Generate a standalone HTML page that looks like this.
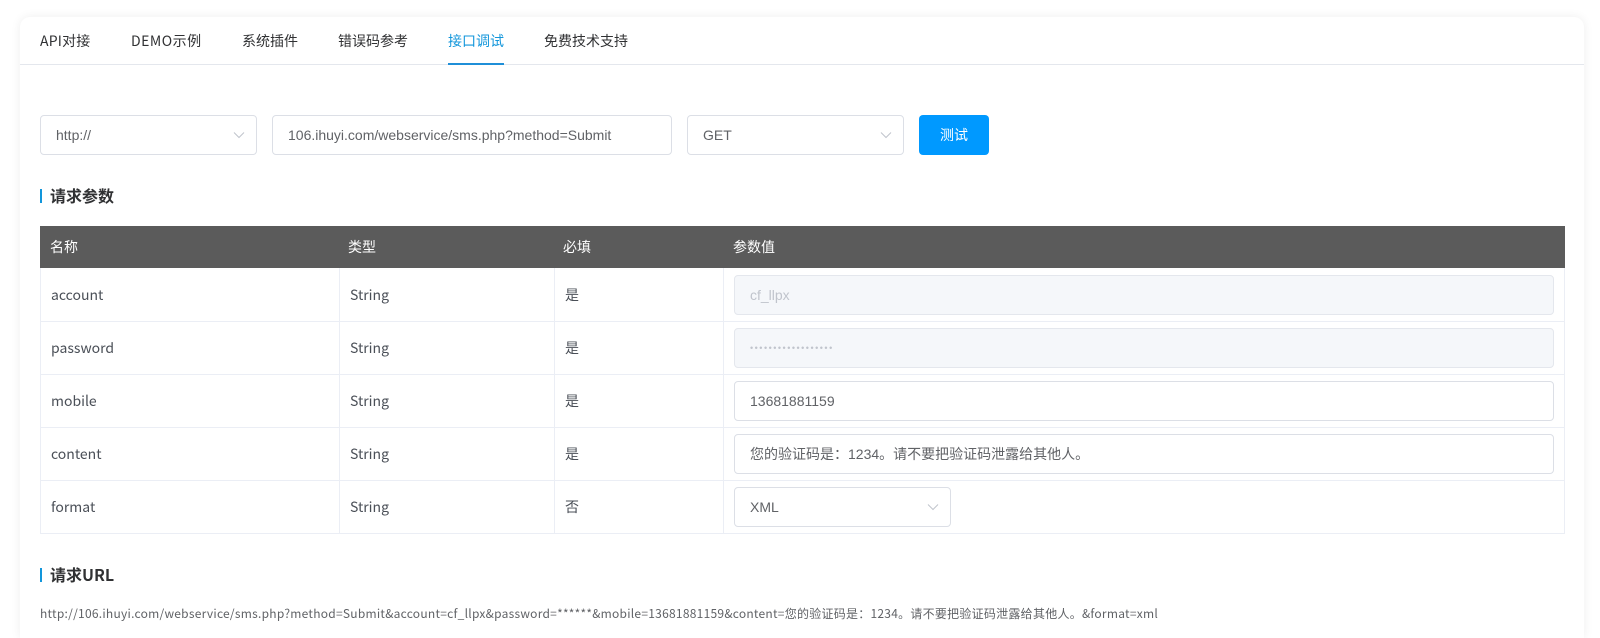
<!DOCTYPE html>
<html lang="zh">
<head>
<meta charset="utf-8">
<title>接口调试</title>
<style>
html,body{margin:0;padding:0;width:1600px;height:638px;overflow:hidden;background:#fff}
body{position:relative;font-family:"Noto Sans CJK SC","Liberation Sans",sans-serif;font-size:14px;color:#333}
div,span{position:absolute;box-sizing:border-box;white-space:nowrap}
.card{left:20px;top:17px;width:1564px;height:621px;background:#fff;border-radius:10px 10px 0 0;box-shadow:0 0 10px rgba(0,0,0,.07)}
.navline{left:20px;top:64px;width:1564px;height:1px;background:#e4e7ed}
.tab{top:29px;height:24px;line-height:24px;font-size:14px;color:#303133}
.tab.on{color:#1296db}
.ink{left:448px;top:63px;width:56px;height:2px;background:#1f8fd8}
.box{height:40px;border:1px solid #dcdfe6;border-radius:4px;background:#fff;font-family:"Liberation Sans","Noto Sans CJK SC",sans-serif;font-size:14px;line-height:38px;color:#606266;padding-left:15px}
.box.dis{background:#f5f7fa;border-color:#e4e7ed;color:#c0c4cc}
.arr{position:absolute;top:14px;right:11px}
.btn{left:919px;top:115px;width:70px;height:40px;background:#0099ff;border-radius:4px;color:#fff;text-align:center;line-height:40px;font-size:14px}
.bar{left:40px;width:2px;height:14px;background:#1296db}
.h{left:50px;height:24px;line-height:24px;font-size:16px;font-weight:700;color:#303133}
.thead{left:40px;top:226px;width:1525px;height:42px;background:#5b5b5b}
.th{top:226px;height:42px;line-height:42px;font-size:14px;color:#fff}
.hl{left:40px;width:1525px;height:1px;background:#ebeef5}
.vl{top:268px;width:1px;height:265px;background:#ebeef5}
.td{height:24px;line-height:24px;font-size:14px;color:#4a4f57}
.url{left:40px;top:604px;height:20px;line-height:20px;font-size:12px;color:#606266;letter-spacing:.255px}
</style>
</head>
<body>
<div class="card"></div>
<div class="navline"></div>
<div class="tab" style="left:40px;letter-spacing:.2px">API对接</div>
<div class="tab" style="left:131px;letter-spacing:.5px">DEMO示例</div>
<div class="tab" style="left:242px">系统插件</div>
<div class="tab" style="left:338px">错误码参考</div>
<div class="tab on" style="left:448px">接口调试</div>
<div class="tab" style="left:544px">免费技术支持</div>
<div class="ink"></div>

<div class="box" style="left:40px;top:115px;width:217px">http://<svg class="arr" width="12" height="10" viewBox="0 0 12 10"><path d="M1 2.5 6 7.5 11 2.5" fill="none" stroke="#c0c4cc" stroke-width="1"/></svg></div>
<div class="box" style="left:272px;top:115px;width:400px">106.ihuyi.com/webservice/sms.php?method=Submit</div>
<div class="box" style="left:687px;top:115px;width:217px">GET<svg class="arr" width="12" height="10" viewBox="0 0 12 10"><path d="M1 2.5 6 7.5 11 2.5" fill="none" stroke="#c0c4cc" stroke-width="1"/></svg></div>
<div class="btn">测试</div>

<div class="bar" style="top:189px"></div>
<div class="h" style="top:183px">请求参数</div>

<div class="thead"></div>
<div class="th" style="left:50px">名称</div>
<div class="th" style="left:348px">类型</div>
<div class="th" style="left:563px">必填</div>
<div class="th" style="left:733px">参数值</div>

<div class="hl" style="top:321px"></div>
<div class="hl" style="top:374px"></div>
<div class="hl" style="top:427px"></div>
<div class="hl" style="top:480px"></div>
<div class="hl" style="top:533px"></div>
<div class="vl" style="left:40px"></div>
<div class="vl" style="left:339px"></div>
<div class="vl" style="left:554px"></div>
<div class="vl" style="left:723px"></div>
<div class="vl" style="left:1564px"></div>

<div class="td" style="left:51px;top:283px">account</div>
<div class="td" style="left:350px;top:283px">String</div>
<div class="td" style="left:565px;top:283px">是</div>
<div class="box dis" style="left:734px;top:275px;width:820px">cf_llpx</div>

<div class="td" style="left:51px;top:336px">password</div>
<div class="td" style="left:350px;top:336px">String</div>
<div class="td" style="left:565px;top:336px">是</div>
<div class="box dis" style="left:734px;top:328px;width:820px;font-size:9px;letter-spacing:1.5px">••••••••••••••••••</div>

<div class="td" style="left:51px;top:389px">mobile</div>
<div class="td" style="left:350px;top:389px">String</div>
<div class="td" style="left:565px;top:389px">是</div>
<div class="box" style="left:734px;top:381px;width:820px">13681881159</div>

<div class="td" style="left:51px;top:442px">content</div>
<div class="td" style="left:350px;top:442px">String</div>
<div class="td" style="left:565px;top:442px">是</div>
<div class="box" style="left:734px;top:434px;width:820px">您的验证码是：1234。请不要把验证码泄露给其他人。</div>

<div class="td" style="left:51px;top:495px">format</div>
<div class="td" style="left:350px;top:495px">String</div>
<div class="td" style="left:565px;top:495px">否</div>
<div class="box" style="left:734px;top:487px;width:217px">XML<svg class="arr" width="12" height="10" viewBox="0 0 12 10"><path d="M1 2.5 6 7.5 11 2.5" fill="none" stroke="#c0c4cc" stroke-width="1"/></svg></div>

<div class="bar" style="top:568px"></div>
<div class="h" style="top:562px">请求URL</div>
<div class="url">http://106.ihuyi.com/webservice/sms.php?method=Submit&amp;account=cf_llpx&amp;password=******&amp;mobile=13681881159&amp;content=您的验证码是：1234。请不要把验证码泄露给其他人。&amp;format=xml</div>
</body>
</html>
